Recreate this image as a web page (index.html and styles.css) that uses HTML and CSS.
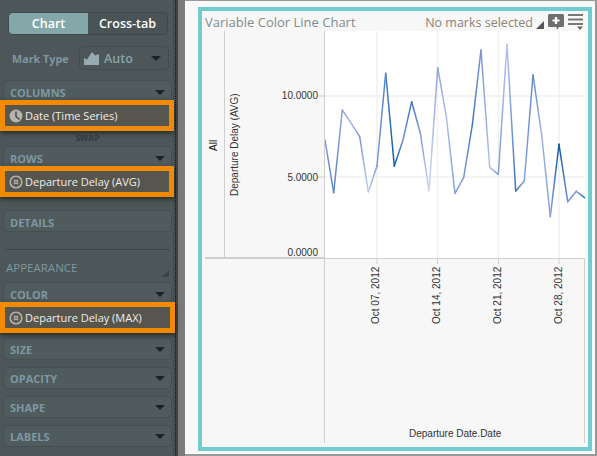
FILE: index.html
```html
<!DOCTYPE html>
<html lang="en">
<head>
    <meta charset="UTF-8">
    <title>Variable Color Line Chart</title>
    <link rel="stylesheet" href="styles.css">
</head>
<body>
    <aside class="sidebar">
        <div class="toggle">
            <div class="toggle-item active">Chart</div>
            <div class="toggle-item">Cross-tab</div>
        </div>

        <div class="mark-type">
            <span class="mark-label">Mark Type</span>
            <div class="mark-select">
                <svg class="area-icon" width="15" height="13" viewBox="0 0 15 13">
                    <path d="M0 13V6L3 7.5 8 0 11 3.5 15 2V13Z"/>
                </svg>
                <span class="mark-value">Auto</span>
                <span class="caret"></span>
            </div>
        </div>

        <!-- Shelves -->
        <section class="shelf shelf-columns">
            <div class="shelf-head">COLUMNS<span class="caret"></span></div>
            <div class="pill">
                <svg class="pill-icon" width="14" height="14" viewBox="0 0 14 14">
                    <circle cx="7" cy="7" r="6.5" fill="#b5b5ad"/>
                    <path d="M7 2.5V7.5L10.5 10.5" fill="none" stroke="#4d4d47" stroke-width="1.6"/>
                </svg>
                Date (Time Series)
            </div>
        </section>
        <div class="swap">SWAP</div>
        <section class="shelf">
            <div class="shelf-head">ROWS<span class="caret"></span></div>
            <div class="pill">
                <svg class="pill-icon" width="14" height="14" viewBox="0 0 14 14">
                    <circle cx="7" cy="7" r="5.8" fill="none" stroke="#b5b5ad" stroke-width="1.6"/>
                    <path d="M5.8 4.5V9.5M8.2 4.5V9.5M4.5 5.8H9.5M4.5 8.2H9.5" fill="none" stroke="#b5b5ad"/>
                </svg>
                Departure Delay (AVG)
            </div>
        </section>
        <section class="shelf shelf-details">
            <div class="shelf-head">DETAILS</div>
        </section>

        <div class="appearance">
            APPEARANCE
            <span class="resize"></span>
        </div>

        <section class="shelf">
            <div class="shelf-head">COLOR<span class="caret"></span></div>
            <div class="pill pill-wide">
                <svg class="pill-icon" width="14" height="14" viewBox="0 0 14 14">
                    <circle cx="7" cy="7" r="5.8" fill="none" stroke="#b5b5ad" stroke-width="1.6"/>
                    <path d="M5.8 4.5V9.5M8.2 4.5V9.5M4.5 5.8H9.5M4.5 8.2H9.5" fill="none" stroke="#b5b5ad"/>
                </svg>
                Departure Delay (MAX)
            </div>
        </section>
        <section class="shelf shelf-first">
            <div class="shelf-head">SIZE<span class="caret"></span></div>
        </section>
        <section class="shelf shelf-next">
            <div class="shelf-head">OPACITY<span class="caret"></span></div>
        </section>
        <section class="shelf shelf-next">
            <div class="shelf-head">SHAPE<span class="caret"></span></div>
        </section>
        <section class="shelf shelf-next">
            <div class="shelf-head">LABELS<span class="caret"></span></div>
        </section>
    </aside>
    <div class="sash"></div>
    <div class="gutter"></div>

    <main class="canvas">
        <div class="pane">
            <header class="pane-head">
                <span class="pane-title">Variable Color Line Chart</span>
                <span class="pane-status">No marks selected</span>
                <span class="corner"></span>
                <svg class="pane-icon" width="16" height="16" viewBox="0 0 16 16">
                    <path d="M1.5 0H14.5A1.5 1.5 0 0 1 16 1.5V11.5A1.5 1.5 0 0 1 14.5 13H11L9 16 8.5 13H1.5A1.5 1.5 0 0 1 0 11.5V1.5A1.5 1.5 0 0 1 1.5 0Z" fill="#6e6e6e"/>
                    <path d="M8 3V10M4.5 6.5H11.5" stroke="#fff" stroke-width="2.2"/>
                </svg>
                <svg class="pane-icon menu-icon" width="16" height="16" viewBox="0 0 16 16">
                    <path d="M0 1H15M0 5.5H15M0 10H15" stroke="#777" stroke-width="2"/>
                    <path d="M9 12.5H15L12 16Z" fill="#666"/>
                </svg>
            </header>

            <!-- viewBox uses the page's own coordinates -->
            <svg id="chart" class="chart" width="380" height="412" viewBox="205 31 380 412">
                <rect class="plot-bg" x="325" y="31" width="260" height="227"/>
                <g class="grid">
                    <path d="M377 31V258M437.5 31V258M498.5 31V258M559 31V258M325 96H585M325 177H585"/>
                </g>
                <g id="lines"></g>
                <g class="axis">
                    <path d="M224.5 31V258M324.5 31V443M584.5 259V443"/>
                    <path d="M318 96H325M318 177H325"/>
                    <path d="M377 259V264M437.5 259V264M498.5 259V264M559 259V264"/>
                    <path class="axis-base" d="M205 258H325"/>
                    <path d="M325 258.5H585"/>
                </g>
                <text class="label label-dark" transform="translate(217 151) rotate(-90)">All</text>
                <text class="label" transform="translate(238 196) rotate(-90)">Departure Delay (AVG)</text>
                <text class="label label-end" x="318" y="99">10.0000</text>
                <text class="label label-end" x="318" y="181">5.0000</text>
                <text class="label label-end" x="318" y="256">0.0000</text>
                <text class="label" transform="translate(379 324) rotate(-90)">Oct 07, 2012</text>
                <text class="label" transform="translate(439.5 324) rotate(-90)">Oct 14, 2012</text>
                <text class="label" transform="translate(500.5 324) rotate(-90)">Oct 21, 2012</text>
                <text class="label" transform="translate(561.5 324) rotate(-90)">Oct 28, 2012</text>
                <text class="label" x="409" y="437">Departure Date.Date</text>
            </svg>
        </div>
    </main>

    <script src="chart.js"></script>
</body>
</html>
```

FILE: styles.css
```css
* {
    box-sizing: border-box;
}

body {
    display: flex;
    width: 597px;
    height: 456px;
    margin: 0;
    overflow: hidden;
    font-family: "Open Sans", Arial, sans-serif;
    background-color: #f8f8f8;
}

/* Sidebar */
.sidebar {
    flex: none;
    width: 173px;
    height: 456px;
    padding: 12px 1px 0 3px;
    background-color: #4d5658;
}

.sash {
    flex: none;
    width: 5px;
    background-color: #3d4648;
    border-left: 2px solid #454e50;
    background-image: repeating-linear-gradient(#14181a 0 1px, #3d4648 1px 2px);
    background-size: 1px 100%;
    background-repeat: no-repeat;
}

.gutter {
    flex: none;
    width: 7px;
    background-color: #7b7b7b;
}

.toggle {
    display: flex;
    width: 160px;
    height: 23px;
    margin-left: 5px;
    border: 1px solid #3f484a;
    border-radius: 5px;
    overflow: hidden;
    background-color: #4a5456;
}

.toggle-item {
    display: flex;
    align-items: center;
    justify-content: center;
    width: 80px;
    color: #fff;
    font-size: 12.5px;
    font-weight: 600;
}

.toggle-item.active {
    background-color: #84a8aa;
}

.mark-type {
    display: flex;
    align-items: center;
    height: 24px;
    margin-top: 11px;
}

.mark-label {
    width: 76px;
    padding-left: 9px;
    color: #7e98a2;
    font-size: 10.8px;
    font-weight: 700;
    white-space: nowrap;
}

.mark-select {
    display: flex;
    align-items: center;
    width: 90px;
    height: 24px;
    padding: 0 7px 0 4px;
    border: 1px solid #434c4e;
    border-radius: 5px;
}

.area-icon {
    fill: #97aab0;
}

.mark-value {
    flex: 1;
    margin-left: 5px;
    color: #8ba3ad;
    font-size: 12.5px;
    font-weight: 600;
}

.caret {
    width: 0;
    height: 0;
    border-style: solid;
    border-width: 5px 5px 0;
    border-color: #1d2224 transparent transparent;
}

.shelf {
    width: 169px;
    margin-top: 11px;
    border: 1px solid #464f51;
    border-radius: 5px;
    background-color: #505b5d;
}

.shelf-columns {
    margin-top: 10px;
}

.shelf-head {
    display: flex;
    align-items: center;
    justify-content: space-between;
    height: 19px;
    padding: 3px 6px 0 6px;
    color: #7e98a2;
    font-size: 11px;
    font-weight: 700;
}

.pill {
    display: flex;
    align-items: center;
    position: relative;
    width: 174px;
    height: 31px;
    margin: 0 0 -1px -4px;
    padding-left: 4px;
    border: 5px solid #f28a00;
    background-color: #56554e;
    box-shadow: 0 2px 5px rgba(0, 0, 0, 0.55);
    color: #eeeeea;
    font-size: 11px;
    font-weight: 400;
    white-space: nowrap;
}

.pill-wide {
    width: 175px;
}

.pill-icon {
    flex: none;
    margin-right: 2px;
}

.swap {
    height: 15px;
    margin-bottom: -11px;
    padding-top: 1px;
    color: #2f3d45;
    font-size: 8.5px;
    font-weight: 700;
    text-align: center;
}

.shelf-details {
    height: 22px;
    margin-top: 13px;
}

.appearance {
    position: relative;
    width: 163px;
    height: 33px;
    margin: 17px 0 -11px 3px;
    padding-top: 10px;
    border-top: 1px solid #3c4547;
    color: #7e98a2;
    font-size: 11.5px;
    font-weight: 400;
}

.resize {
    position: absolute;
    right: 0;
    top: 20px;
    width: 0;
    height: 0;
    border-style: solid;
    border-width: 0 0 7px 7px;
    border-color: transparent transparent #3a4244;
}

.shelf-first {
    height: 22px;
    margin-top: 5px;
}

.shelf-next {
    height: 22px;
    margin-top: 7px;
}

.shelf-first .shelf-head,
.shelf-next .shelf-head {
    padding-top: 1px;
}

/* Chart pane */
.canvas {
    flex: none;
    width: 412px;
    height: 456px;
    padding: 6px 3px 0 13px;
    border-top: 1px solid #999;
    border-right: 2px solid #999;
    border-bottom: 2px solid #999;
}

.pane {
    width: 394px;
    height: 444px;
    border: 4px solid #72cbcf;
    background-color: #f7f7f7;
}

.pane-head {
    display: flex;
    align-items: center;
    height: 20px;
    padding: 2px 4px 0 3px;
}

.pane-title {
    flex: 1;
    color: #7f8c8e;
    font-size: 13px;
}

.pane-status {
    color: #8d8273;
    font-size: 12.5px;
    font-weight: 400;
}

.corner {
    width: 0;
    height: 0;
    margin: 6px 4px 0 3px;
    border-style: solid;
    border-width: 0 0 8px 8px;
    border-color: transparent transparent #555;
}

.pane-icon {
    flex: none;
}

.menu-icon {
    margin-left: 4px;
}

.chart {
    display: block;
    margin-left: 3px;
}

.plot-bg {
    fill: #fff;
}

.grid path {
    fill: none;
    stroke: #f1f1f1;
    stroke-width: 1.5;
}

.axis path {
    fill: none;
    stroke: #cfcfcf;
    stroke-width: 1;
}

.axis .axis-base {
    stroke-width: 2;
}

.label {
    font-family: "Liberation Sans", Arial, sans-serif;
    font-size: 10px;
    fill: #333;
}

.label-end {
    text-anchor: end;
}

.label-dark {
    fill: #111;
}
```

FILE: chart.js
```javascript
document.addEventListener("DOMContentLoaded", function () {
    const NS = 'http://www.w3.org/2000/svg';

    // Average delay per day, [x, y, color]
    const points = [
        [325, 140, '#7f9ad6'], [333.7, 192.7, '#5c86c8'], [342.3, 110, '#8fa3dc'], [351, 123, '#b0bce6'],
        [359.7, 136.7, '#7c97d6'], [368.3, 192, '#c3cbee'], [377, 166, '#7c9ad6'], [385.7, 73.3, '#4f82c6'],
        [394.3, 166, '#0a5ca8'], [403, 140, '#6f90d0'], [411.7, 101.7, '#3d78bd'], [420.3, 133, '#7f9ad6'],
        [429, 190.7, '#d0d4f2'], [437.7, 67.7, '#8ea3dd'], [446.3, 116.7, '#b0bce8'], [455, 193.3, '#87a0da'],
        [463.7, 177.3, '#7f9bd8'], [472.3, 125, '#3d78bd'], [481, 50, '#7c97d6'], [489.7, 167.3, '#b4c0ea'],
        [498.3, 174.3, '#7e9ad6'], [507, 44.3, '#b8c3ec'], [515.7, 191, '#3a75ba'], [524.3, 181, '#85a0da'],
        [533, 75, '#628ccb'], [541.7, 135, '#9fb0e2'], [550.3, 216.7, '#8aa2dc'], [559, 144.3, '#0a5ca8'],
        [567.7, 201.7, '#6f90d0'], [576.3, 191.3, '#7f9ad6'], [585, 198, '#2a6cb4']
    ];

    const chart = document.getElementById('chart');
    const lines = document.getElementById('lines');
    const defs = document.createElementNS(NS, 'defs');
    chart.insertBefore(defs, chart.firstChild);

    const make = (name, attrs, parent) => {
        const el = document.createElementNS(NS, name);
        Object.keys(attrs).forEach(key => el.setAttribute(key, attrs[key]));
        parent.appendChild(el);
        return el;
    };

    // One gradient per segment so the color runs from point to point
    points.slice(1).forEach((end, i) => {
        const start = points[i];
        const grad = make('linearGradient', {
            id: 'seg' + i, gradientUnits: 'userSpaceOnUse',
            x1: start[0], y1: start[1], x2: end[0], y2: end[1]
        }, defs);
        make('stop', { offset: '0', 'stop-color': start[2] }, grad);
        make('stop', { offset: '1', 'stop-color': end[2] }, grad);
        make('line', {
            x1: start[0], y1: start[1], x2: end[0], y2: end[1],
            stroke: 'url(#seg' + i + ')', 'stroke-width': 1.5, 'stroke-linecap': 'round'
        }, lines);
    });
});
```
